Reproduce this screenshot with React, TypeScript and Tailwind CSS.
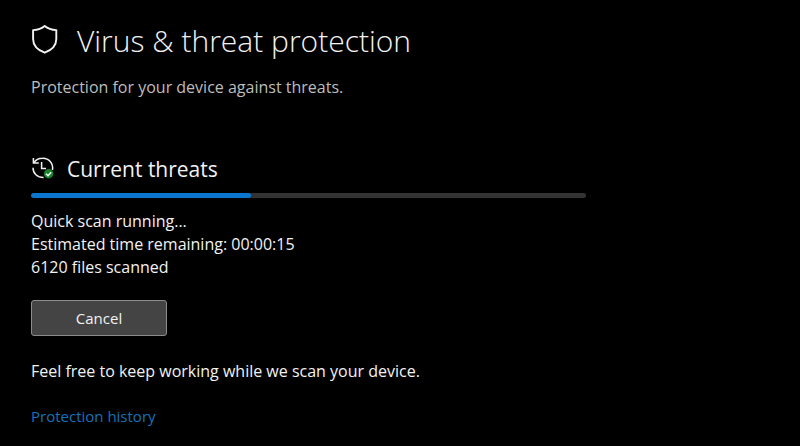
const scan = { done: 220, total: 555, remaining: "00:00:15", files: 6120 };

function ShieldIcon() {
  return (
    <svg className="mb-1 h-[30px] w-[28px] shrink-0" viewBox="0 0 28 30" fill="none" stroke="#f2f2f2" strokeWidth="1.9" strokeLinejoin="round" aria-hidden="true">
      <path d="M13.7 2C11 4.4 7 5.9 2.1 6.1V15C2.1 21.3 6.6 26 13.7 28.7C20.8 26 25.3 21.3 25.3 15V6.1C20.6 5.9 16.5 4.4 13.7 2Z" />
    </svg>
  );
}

function HistoryIcon() {
  return (
    <svg className="h-6 w-6 shrink-0" viewBox="0 0 24 24" fill="none" aria-hidden="true">
      <g stroke="#f2f2f2" strokeWidth="1.5">
        <path d="M2.8 5.8C4.6 2.8 7.8 1.2 11.6 1.2A9.7 9.7 0 0 1 21.4 13" />
        <path d="M2 10.8C2 16.4 6.2 20.6 12.6 20.6" />
        <path d="M2.4 1V6H7.8" />
        <path d="M10.6 5V11.6H15" />
      </g>
      <circle cx="17.6" cy="16.8" r="4.7" fill="#16852a" />
      <path d="M15 16.7L17 18.7L20.2 15.3" stroke="#fff" strokeWidth="1.5" />
    </svg>
  );
}

export default function App() {
  return (
    <main className="min-h-screen bg-black px-[31px] pt-5 font-['Open_Sans','Noto_Sans',sans-serif] text-base leading-[23px] text-[#f2f2f2]">
      <header>
        <div className="flex items-center gap-[18px]">
          <ShieldIcon />
          <h1 className="text-[30px] leading-[42px] font-light">Virus &amp; threat protection</h1>
        </div>
        <p className="mt-[14px] text-[#bdbdbd]">Protection for your device against threats.</p>
      </header>

      <section className="mt-[54px]">
        <div className="flex items-center gap-3">
          <HistoryIcon />
          <h2 className="text-[21px] leading-[32px]">Current threats</h2>
        </div>
        <div
          role="progressbar"
          aria-label="Scan progress"
          aria-valuemin={0}
          aria-valuemax={scan.total}
          aria-valuenow={scan.done}
          className="mt-2 h-[5px] w-full max-w-[555px] overflow-hidden rounded-full bg-[#333333]"
        >
          <div className="h-full rounded-full bg-[#0a76cf]" style={{ width: `${(scan.done / scan.total) * 100}%` }} />
        </div>
        <div className="mt-3">
          <p>Quick scan running...</p>
          <p>Estimated time remaining: {scan.remaining}</p>
          <p>{scan.files} files scanned</p>
        </div>
        <button type="button" className="mt-[21px] h-9 w-[136px] rounded-[3px] border border-[#8c8c8c] bg-[#444444] text-[15px]">
          Cancel
        </button>
        <p className="mt-6">Feel free to keep working while we scan your device.</p>
        <a href="#history" className="mt-[22px] inline-block text-[15px] text-[#1673ba]">
          Protection history
        </a>
      </section>
    </main>
  );
}
